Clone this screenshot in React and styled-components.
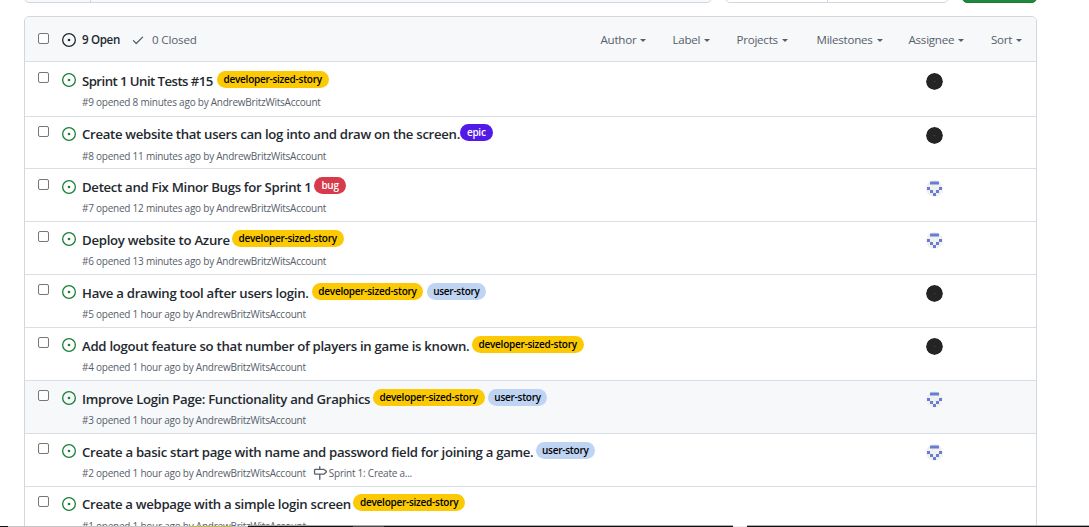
import React from "react";
import styled, { createGlobalStyle } from "styled-components";

const Global = createGlobalStyle`
  * { box-sizing: border-box; }
  html, body, #root { height: 100%; }
  body { margin: 0; overflow: hidden; background: #fff; color: #24292f;
    font-family: "Open Sans", "Noto Sans", sans-serif; }
`;
const Page = styled.div`
  position: relative; height: 527px; overflow: hidden;
  padding: 0 52px 0 24px; display: flex; flex-direction: column;
`;
const Toolbar = styled.div`
  display: flex; flex: none; height: 3px; margin-bottom: 13px; overflow: hidden; align-items: flex-end;
`;
const Control = styled.div`
  flex: none; display: flex; height: 28px; width: ${p => p.$w}px; margin-right: ${p => p.$gap || 0}px;
  border: 1px solid ${p => p.$green ? "#1b7f37" : "#d0d7de"}; border-radius: 5px;
  background: ${p => p.$green ? "#1f883d" : p.$fill || "#fff"};
`;
const Segment = styled.div`width: ${p => p.$w}px; border-right: 1px solid #d0d7de;`;
const List = styled.div`
  flex: none; width: 1013px; border: 1px solid #d0d7de; border-radius: 5px 5px 0 0; overflow: hidden;
`;
const Header = styled.div`
  height: 44.4px; display: flex; align-items: center; background: #f6f8fa; padding-left: 13px;
  font-size: 11.6px; color: #57606a; padding-top: 1px;
`;
const Check = styled.span`
  flex: none; width: 11px; height: 11px; border: 1px solid #767676; border-radius: 2px; background: #fff;
  margin-top: ${p => p.$top || 0}px;
`;
const Icon = styled.svg`
  flex: none; display: block; width: 14px; height: 14px; fill: ${p => p.$c || "currentColor"};
`;
const OpenTab = styled.span`
  display: flex; align-items: center; gap: 6px; margin-left: 13px; width: 69px; color: #24292f; font-weight: 600;
  letter-spacing: -0.35px;
`;
const ClosedTab = styled.span`display: flex; align-items: center; gap: 7px; letter-spacing: -0.15px;`;
const Filters = styled.div`
  margin-left: auto; padding-right: 14px; display: grid; grid-template-columns: 72px 64px 80px 92px 82.5px 31px;
`;
const Filter = styled.span`
  display: flex; align-items: center; white-space: nowrap; letter-spacing: -0.25px;
  &::after { content: ""; margin-left: 4px; margin-top: 2px; border: 3.5px solid transparent; border-top-color: currentColor; border-bottom: 0; }
`;
const Row = styled.div`
  height: ${p => p.$first ? 54.2 : 52.89}px; border-top: 1px solid #d8dee4; display: flex; padding: ${p => p.$first ? 9.8 : 9.1}px 0 0 13px;
  background: ${p => p.$hover ? "#f6f8fa" : "#fff"};
`;
const State = styled(Icon)`margin: 1px 6px 0 13px;`;
const Body = styled.div`flex: none; width: 844px;`;
const TitleLine = styled.div`display: flex; align-items: flex-start; height: 22px; margin-top: -2.4px;`;
const Title = styled.span`
  flex: none; width: ${p => p.$w - 0.7}px; font-size: 13.2px; font-weight: 600; line-height: 23px; white-space: nowrap;
  letter-spacing: ${p => p.$ls ?? -0.31}px;
`;
const tones = {
  dev: ["#fbca04", "#000", 111.8], epic: ["#5319e7", "#fff", 32.5], bug: ["#d73a4a", "#fff", 31.5], user: ["#bfd4f2", "#000", 59],
};
const Tag = styled.span`
  flex: none; height: 17px; width: ${p => tones[p.$t][2]}px; margin-right: 3.5px; border-radius: 9px; text-align: center;
  background: ${p => tones[p.$t][0]}; color: ${p => tones[p.$t][1]}; font-size: 10px; line-height: 17px;
  font-weight: 600;
  white-space: nowrap; margin-top: 1px; letter-spacing: -0.26px;
`;
const Meta = styled.div`
  display: flex; align-items: center; margin-top: 2.8px; height: 15px; font-size: 10px; color: #57606a; white-space: nowrap;
  letter-spacing: -0.24px;
`;
const Milestone = styled.span`display: flex; align-items: center; gap: 2px; margin-left: 7px;`;
const Avatar = styled.svg`flex: none; width: 17px; height: 17px; margin-top: 1px; border-radius: 50%; display: block;`;
const BottomStrip = styled.div`position: absolute; left: 0; right: 0; bottom: 0; height: 2px; display: flex; align-items: flex-end;`;
const Strip = styled.i`
  flex: none; height: ${p => p.$edge ? 2 : 1}px; width: ${p => p.$w}px; background: ${p => p.$c};
  border-top: ${p => p.$edge ? "1px solid #aaa" : 0};
`;

const Issue = ({ as, c }) => (
  <Icon as={as} viewBox="0 0 16 16" $c={c}>
    <path d="M8 9.5a1.5 1.5 0 1 0 0-3 1.5 1.5 0 0 0 0 3Z" />
    <path d="M8 0a8 8 0 1 1 0 16A8 8 0 0 1 8 0ZM1.5 8a6.5 6.5 0 1 0 13 0 6.5 6.5 0 0 0-13 0Z" />
  </Icon>
);
const DarkAvatar = () => (
  <Avatar viewBox="0 0 17 17"><circle cx="8.5" cy="8.5" r="8.5" fill="#242424" /><path d="M7.5 8.5h2" stroke="#444" strokeWidth=".8" /></Avatar>
);
const PixelAvatar = () => (
  <Avatar viewBox="0 0 17 17">
    <rect width="17" height="17" fill="#f0f0f0" />
    <path fill="#667dd0" d="M4 1.5h9v3H4zM1 7h3v3H1zM13 7h3v3h-3zM4 10h3v3H4zM10 10h3v3h-3zM7 13h3v3H7z" />
  </Avatar>
);
const tagText = { dev: "developer-sized-story", epic: "epic", bug: "bug", user: "user-story" };
const filters = ["Author", "Label", "Projects", "Milestones", "Assignee", "Sort"];
const issues = [
  { n: 9, title: "Sprint 1 Unit Tests #15", w: 135.5, ls: -0.55, tags: ["dev"], age: "8 minutes", dark: true },
  { n: 8, title: "Create website that users can log into and draw on the screen.", w: 378.7, tags: ["epic"], age: "11 minutes", dark: true },
  { n: 7, title: "Detect and Fix Minor Bugs for Sprint 1", w: 233, tags: ["bug"], age: "12 minutes" },
  { n: 6, title: "Deploy website to Azure", w: 150.5, ls: -0.27, tags: ["dev"], age: "13 minutes" },
  { n: 5, title: "Have a drawing tool after users login.", w: 230.3, ls: -0.28, tags: ["dev", "user"], age: "1 hour", dark: true },
  { n: 4, title: "Add logout feature so that number of players in game is known.", w: 390.5, ls: -0.29, tags: ["dev"], age: "1 hour", dark: true },
  { n: 3, title: "Improve Login Page: Functionality and Graphics", w: 291.5, tags: ["dev", "user"], age: "1 hour", hover: true },
  { n: 2, title: "Create a basic start page with name and password field for joining a game.", w: 454.5, ls: -0.3, tags: ["user"], age: "1 hour", milestone: "Sprint 1: Create a..." },
  { n: 1, title: "Create a webpage with a simple login screen", w: 272, tags: ["dev"], age: "1 hour", none: true },
];

export default function App() {
  return (
    <Page>
      <Global />
      <Toolbar>
        <Control $w={688} $gap={13} $fill="#f6f8fa"><Segment $w={66} /></Control>
        <Control $w={224} $gap={13}><Segment $w={102} /></Control>
        <Control $w={75} $green />
      </Toolbar>
      <List>
        <Header>
          <Check $top={-3} />
          <OpenTab><Issue />9 Open</OpenTab>
          <ClosedTab>
            <Icon viewBox="0 0 16 16"><path d="M13.78 4.22a.75.75 0 0 1 0 1.06l-7.25 7.25a.75.75 0 0 1-1.06 0L2.22 9.28a.751.751 0 0 1 .018-1.042.751.751 0 0 1 1.042-.018L6 10.94l6.72-6.72a.75.75 0 0 1 1.06 0Z" /></Icon>
            0 Closed
          </ClosedTab>
          <Filters>{filters.map(f => <Filter key={f}>{f}</Filter>)}</Filters>
        </Header>
        {issues.map((it, i) => (
          <Row key={it.n} $first={i === 0} $hover={it.hover}>
            <Check />
            <Issue as={State} c="#1a7f37" />
            <Body>
              <TitleLine>
                <Title $w={it.w} $ls={it.ls}>{it.title}</Title>
                {it.tags.map(t => <Tag key={t} $t={t}>{tagText[t]}</Tag>)}
              </TitleLine>
              <Meta>
                #{it.n} opened {it.age} ago by AndrewBritzWitsAccount
                {it.milestone && (
                  <Milestone>
                    <Icon viewBox="0 0 16 16"><path d="M7.75 0a.75.75 0 0 1 .75.75V3h3.634c.414 0 .814.147 1.13.414l2.07 1.75a1.75 1.75 0 0 1 0 2.672l-2.07 1.75a1.75 1.75 0 0 1-1.13.414H8.5v5.25a.75.75 0 0 1-1.5 0V10H2.75A1.75 1.75 0 0 1 1 8.25v-3.5C1 3.784 1.784 3 2.75 3H7V.75A.75.75 0 0 1 7.75 0Zm4.384 8.5a.25.25 0 0 0 .161-.06l2.07-1.75a.248.248 0 0 0 0-.38l-2.07-1.75a.25.25 0 0 0-.161-.06H2.75a.25.25 0 0 0-.25.25v3.5c0 .138.112.25.25.25h9.384Z" /></Icon>
                    {it.milestone}
                  </Milestone>
                )}
              </Meta>
            </Body>
            {!it.none && (it.dark ? <DarkAvatar /> : <PixelAvatar />)}
          </Row>
        ))}
      </List>
      <BottomStrip>
        <Strip $w={8} $c="#111" /><Strip $w={182} $c="#c4c4c4" /><Strip $w={42} $c="#b9bd5a" />
        <Strip $w={16} $c="#c4c4c4" /><Strip $w={105} $c="#111" $edge /><Strip $w={31} $c="#4a4a4a" $edge />
        <Strip $w={349} $c="#111" $edge /><Strip $w={14} $c="#eee" /><Strip $w={342} $c="#111" $edge />
      </BottomStrip>
    </Page>
  );
}
